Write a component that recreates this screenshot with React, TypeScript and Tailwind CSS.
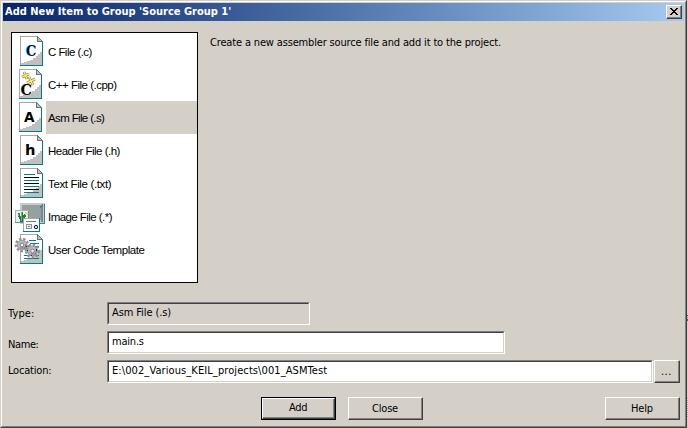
import React from 'react';

const ui = 'font-["DejaVu_Sans_Condensed","DejaVu_Sans",sans-serif] [font-stretch:condensed]';

function Page({ children }: { children?: React.ReactNode }) {
  return (
    <svg width="23" height="30" viewBox="0 0 23 30" className="block overflow-visible" shapeRendering="crispEdges">
      <path d="M0 0H18L23 5V30H0Z" fill="#fff" />
      <path d="M22 16V29H1V27H4V26H7V25H10V24H13V22H16V20H18V18H20V16Z" fill="#c0c0c0" />
      <path d="M.5 30V.5H18" fill="none" stroke="#a8a8a8" />
      <path d="M0 29.5H22.5V5" fill="none" stroke="#008080" />
      <path d="M17 0L23 6H17Z" fill="#c0c0c0" />
      <path d="M17.5 0V5.5H23M17.5 .5L22.5 5.5" fill="none" stroke="#607878" />
      {children}
    </svg>
  );
}

function Letter({ ch, serif }: { ch: string; serif?: boolean }) {
  return (
    <Page>
      {serif ? (
        <text x="6" y="20" className="drop-shadow-[-1px_0_0_#40e8f8]" fontFamily="DejaVu Serif, serif" fontWeight="bold" fontSize="14" fill="#000050" textLength="10.5" lengthAdjust="spacingAndGlyphs">{ch}</text>
      ) : (
        <text x="5" y="20" fontFamily="DejaVu Sans, sans-serif" fontWeight="bold" fontSize="14.5" fill="#000" textLength="10.5" lengthAdjust="spacingAndGlyphs">{ch}</text>
      )}
    </Page>
  );
}

function CppIcon() {
  return (
    <Page>
      <text x="1.5" y="26" fontFamily="DejaVu Serif, serif" fontWeight="bold" fontSize="15" fill="#000" textLength="11.5" lengthAdjust="spacingAndGlyphs">C</text>
      <g fill="none" stroke="#6c6c60" strokeWidth="2.6" shapeRendering="auto">
        <path d="M3 8L10 5M5 3L8 10M8 14L16 10M10 8L14 16" />
      </g>
      <g fill="none" stroke="#ffee60" strokeWidth="1.4" shapeRendering="auto">
        <path d="M3 8L10 5M5 3L8 10M8 14L16 10M10 8L14 16" />
      </g>
    </Page>
  );
}

function TextIcon() {
  return (
    <Page>
      <path d="M4 6.5H15M4 12.5H19M4 18.5H19M4 24.5H19" stroke="#008080" />
      <path d="M4 9.5H19M4 15.5H19M4 21.5H19" stroke="#000" />
    </Page>
  );
}

function ImageIcon() {
  return (
    <svg width="31" height="29" viewBox="0 0 31 29" className="mt-0.5 block shrink-0" shapeRendering="crispEdges">
      <path d="M5 0H30V21H5Z" fill="#c4cccc" />
      <path d="M7 2H26V17H7Z" fill="#96a0a0" />
      <path d="M26 2H28V19H26Z" fill="#7c8888" />
      <path d="M29.5 1V20.5H20M28 1.5L25 4.5" fill="none" stroke="#388888" />
      <path d="M0 7H14V20H0Z" fill="#eef0f0" />
      <path d="M.5 20V7.5H13.5" fill="none" stroke="#b0b0b0" />
      <path d="M0 19.5H13.5V8" fill="none" stroke="#709090" />
      <path d="M3 10H5V13H6V9H8V12H9V11H11V14H10V16H8V19H5V16H4V14H3Z" fill="#207860" />
      <path d="M6 9H7V18H6ZM3 11H4V13H3Z" fill="#80b858" />
      <path d="M10 9H13V12H10Z" fill="#f0e468" />
      <path d="M8 16H25V29H8Z" fill="#fff" />
      <path d="M8.5 28V15.5H24" fill="none" stroke="#a0a8a8" />
      <path d="M8 28.5H24.5V15" fill="none" stroke="#008080" />
      <path d="M11 18.5H21" stroke="#707878" />
      <path d="M11.5 21.5H16.5V25.5H11.5Z" fill="#eee" stroke="#909090" />
      <path d="M13 23.5H15" stroke="#808080" />
      <circle cx="21" cy="24" r="1.7" fill="#d0e0f8" stroke="#101880" shapeRendering="auto" />
    </svg>
  );
}

function Gear({ x, y, r }: { x: number; y: number; r: number }) {
  return (
    <g transform={`translate(${x} ${y})`} shapeRendering="auto">
      <circle r={r - 0.8} fill="none" stroke="#909090" strokeWidth="2.6" strokeDasharray="2.3 1.8" />
      <circle r={r - 2} fill="#b8b8b8" stroke="#989898" />
      <path d="M-2 3L3 3L4 -1" fill="none" stroke="#787880" />
      <circle r="1.8" fill="#f4f4f4" stroke="#707078" strokeWidth=".8" />
    </g>
  );
}

function TemplateIcon() {
  return (
    <Page>
      <path d="M9 6.5H16M10 9.5H19M15 12.5H19M4 21.5H19M4 24.5H19" stroke="#008080" />
      <Gear x={2} y={11} r={6.8} />
      <Gear x={12.5} y={17} r={7} />
      <path d="M7 16H8V17H7ZM11 21H12V22H11ZM16 15H17V17H16ZM6 12H7V13H6Z" fill="#202080" />
    </Page>
  );
}

const rows = [
  { label: 'C File (.c)', icon: <Letter ch="C" serif />, pad: 'pl-2', sp: 'tracking-[-0.55px]' },
  { label: 'C++ File (.cpp)', icon: <CppIcon />, pad: 'pl-[7px]', sp: 'tracking-[-0.5px]' },
  { label: 'Asm File (.s)', icon: <Letter ch="A" />, pad: 'pl-[7px]', sp: 'tracking-[-0.64px]', selected: true },
  { label: 'Header File (.h)', icon: <Letter ch="h" />, pad: 'pl-2', sp: 'tracking-[-0.5px]' },
  { label: 'Text File (.txt)', icon: <TextIcon />, pad: 'pl-2', sp: 'tracking-[-0.36px]' },
  { label: 'Image File (.*)', icon: <ImageIcon />, pad: 'pl-[3px]', sp: 'tracking-[-0.55px]' },
  { label: 'User Code Template', icon: <TemplateIcon />, pad: 'pl-2', sp: 'tracking-[-0.46px]' },
];

function Field({ children, className }: { children: React.ReactNode; className: string }) {
  return (
    <div className={`h-[23px] border border-t-[#808080] border-l-[#808080] border-r-white border-b-white ${className}`}>
      <div className="h-[21px] border border-t-[#404040] border-l-[#404040] border-r-[#d4d0c8] border-b-[#d4d0c8] pl-[3px] leading-[18px]">{children}</div>
    </div>
  );
}

function Button({ children, className, inner = '' }: { children: React.ReactNode; className: string; inner?: string }) {
  return (
    <button className={`block shrink-0 border border-t-white border-l-white border-r-[#404040] border-b-[#404040] ${className}`}>
      <span className={`flex h-full items-center justify-center border-r border-b border-[#808080] ${inner}`}>{children}</span>
    </button>
  );
}

export default function App() {
  return (
    <div className={`flex h-[428px] w-[688px] bg-[#d4d0c8] text-[11px] text-black ${ui}`}>
      <div className="h-[428px] w-[687px] border-t border-l border-r border-b border-t-[#d4d0c8] border-l-[#d4d0c8] border-r-[#404040] border-b-[#404040]">
        <div className="h-[426px] border border-t-white border-l-white border-r-[#808080] border-b-[#808080]">
          <header className="mx-px mt-px flex h-[18px] items-center justify-between bg-linear-to-r from-[#0a246a] to-[#a6caf0] pr-[2px] pl-[2px] font-bold text-white">
            <span className="pt-px">Add New Item to Group 'Source Group 1'</span>
            <Button className="h-[14px] w-4 bg-[#d4d0c8]">
              <svg width="8" height="7" viewBox="0 0 8 7" shapeRendering="crispEdges">
                <path d="M0 0h2v1h1v1h2v-1h1v-1h2v1h-1v1h-1v1h-1v1h1v1h1v1h1v1h-2v-1h-1v-1h-2v1h-1v1h-2v-1h1v-1h1v-1h1v-1h-1v-1h-1v-1h-1z" fill="#000" />
              </svg>
            </Button>
          </header>
          <main className="flex pt-[11px] pl-[9px]">
            <div className='h-[251px] w-[187px] border border-black bg-white pt-[2px] font-["Liberation_Sans",Arial,sans-serif] text-[11.5px]'>
              {rows.map((r) => (
                <div key={r.label} className="flex h-[33px]">
                  <div className={`w-[34px] shrink-0 pt-px ${r.pad}`}>{r.icon}</div>
                  <div className={`flex flex-1 items-center whitespace-nowrap pt-[2px] pl-[2px] ${r.sp} ${r.selected ? 'bg-[#d4d0c8]' : ''}`}>{r.label}</div>
                </div>
              ))}
            </div>
            <p className="pt-[3px] pl-3 leading-4 tracking-[-0.16px]">Create a new assembler source file and add it to the project.</p>
          </main>
          <section className="flex flex-col gap-[6px] pt-[19px] pl-[5px]">
            <div className="flex">
              <label className="w-[100px] pt-[4px] pl-px leading-4 tracking-[0.1px]">Type:</label>
              <Field className="w-[203px] tracking-[-0.1px]">Asm File (.s)</Field>
            </div>
            <div className="flex">
              <label className="w-[100px] pt-[6px] pl-px leading-4 tracking-[-0.4px]">Name:</label>
              <Field className="w-[398px] bg-white tracking-[-0.2px]">main.s</Field>
            </div>
            <div className="flex">
              <label className="w-[100px] pt-[3px] pl-px leading-4 tracking-[-0.2px]">Location:</label>
              <Field className="w-[546px] bg-white tracking-[0.09px]">E:\002_Various_KEIL_projects\001_ASMTest</Field>
              <Button className="ml-px h-[23px] w-[26px]" inner="pt-[3px] tracking-[0.6px]">...</Button>
            </div>
          </section>
          <footer className="flex pt-[14px] pl-[259px]">
            <div className="h-[23px] w-[75px] border border-black">
              <Button className="h-[21px] w-[73px] tracking-[-0.3px]" inner="pt-px">Add</Button>
            </div>
            <Button className="ml-3 h-[23px] w-[75px] tracking-[-0.2px]" inner="pt-[2px]">Close</Button>
            <Button className="ml-[182px] h-[23px] w-[75px] tracking-[-0.2px]" inner="pt-[2px]">Help</Button>
          </footer>
        </div>
      </div>
      <div className="flex w-px flex-col">
        <i className="mt-[315px] h-px bg-[#405880]" />
        <i className="mt-px h-px bg-[#70a0b0]" />
        <i className="mt-px h-[2px] bg-[#506080]" />
        <i className="mt-[77px] h-5 bg-[repeating-linear-gradient(to_bottom,#a8a8b0_0_1px,#e4e4e4_1px_2px)]" />
      </div>
    </div>
  );
}
